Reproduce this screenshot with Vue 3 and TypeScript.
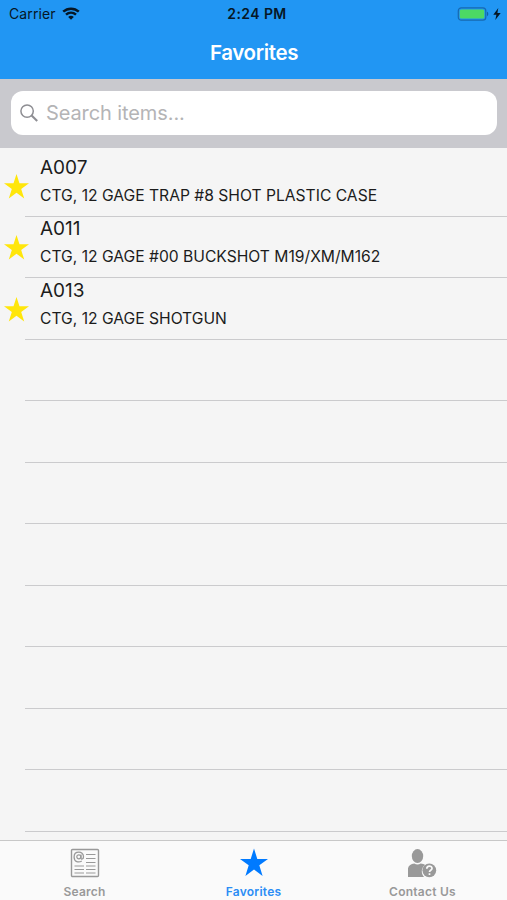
<script setup lang="ts">
interface Item {
  code: string
  description: string
}

const items: Item[] = [
  { code: 'A007', description: 'CTG, 12 GAGE TRAP #8 SHOT PLASTIC CASE' },
  { code: 'A011', description: 'CTG, 12 GAGE #00 BUCKSHOT M19/XM/M162' },
  { code: 'A013', description: 'CTG, 12 GAGE SHOTGUN' },
]
const emptyRows = 8
</script>

<template>
  <div class="screen">
    <header class="header">
      <div class="status">
        <div class="status-left">
          <span class="carrier">Carrier</span>
          <svg class="wifi" viewBox="0 0 18 13" fill="none" stroke="#061726" stroke-width="2.500">
            <path d="M1.2 4.7C5.7.6 12.300.6 16.800 4.700" />
            <path d="M4 7.600c2.900-2.600 7.100-2.600 10 0" />
            <path d="M6.200 9.900c1.600-1.500 4-1.500 5.600 0L9 12.700z" fill="#061726" stroke="none" />
          </svg>
        </div>
        <span class="clock">2:24 PM</span>
        <div class="status-right">
          <svg class="battery" viewBox="0 0 32 14">
            <rect x="1.300" y=".8" width="27.500" height="12.400" rx="3" fill="#2196f3" stroke="#1769b0" stroke-width="1.200" />
            <rect x="2.800" y="2.400" width="24.500" height="9.200" rx="1.500" fill="#4cd964" />
            <path d="M30 4.800c1.700.5 1.700 3.900 0 4.400z" fill="#1261a6" />
          </svg>
          <svg class="bolt" viewBox="0 0 8 12">
            <path d="M5.300 0 .3 6.700h3.100L2.300 12l5.400-7H4.400z" fill="#061726" />
          </svg>
        </div>
      </div>
      <h1 class="title">Favorites</h1>
    </header>

    <div class="search-bar">
      <label class="search-field">
        <svg class="glass" viewBox="0 0 18 18" fill="none" stroke="#8e8e93">
          <circle cx="7.100" cy="7.100" r="6.200" stroke-width="1.500" />
          <path d="m11.600 11.600 5.600 5.500" stroke-width="2.100" />
        </svg>
        <input class="search-input" type="text" placeholder="Search items..." />
      </label>
    </div>

    <main class="list">
      <div v-for="item in items" :key="item.code" class="row">
        <svg class="row-star" viewBox="0 0 24 24">
          <path d="M12 0l2.850 8.900H24l-7.500 5.600 2.900 9.100L12 18l-7.400 5.600 2.900-9.100L0 8.900h9.150z" />
        </svg>
        <div class="cell">
          <div class="code">{{ item.code }}</div>
          <div class="description">{{ item.description }}</div>
        </div>
      </div>
      <div v-for="n in emptyRows" :key="n" class="row"></div>
    </main>

    <nav class="tabs">
      <a class="tab">
        <svg class="tab-icon" viewBox="0 0 30 30" fill="none" stroke="#999">
          <rect x="1.500" y="1.500" width="27" height="27" rx="1" stroke-width="1.400" />
          <circle cx="8.800" cy="8.800" r="2" stroke-width="1.200" />
          <path d="M11 6.500v3.500c0 1.800 2.500 1.300 2.500-1.300 0-6-9.400-6-9.400.2 0 5 4.400 6 7.700 4.100" stroke-width="1.300" />
          <path d="M16 6.500h9.500M16 10.500h9.500M16 14.500h9.500M16 18h9.500M16 21.500h9.500M16 25h9.500M4.500 18h9.500M4.500 21.500h9.500M4.500 25h9.500" stroke-width="1.200" />
        </svg>
        <span>Search</span>
      </a>
      <a class="tab active">
        <svg class="tab-icon" viewBox="0 0 30 30">
          <path d="M15 .6l3.300 10.300H29l-8.700 6.400 3.300 10.600L15 21.500l-8.600 6.400 3.300-10.600L1 10.900h10.700z" fill="#007aff" />
        </svg>
        <span>Favorites</span>
      </a>
      <a class="tab">
        <svg class="tab-icon" viewBox="1.500 -.5 30 30" fill="#999">
          <ellipse cx="11" cy="7.600" rx="5.700" ry="7" />
          <path d="M1.200 28.500v-6c0-5 2.300-6.800 6.600-7.500 2 1.300 4.400 1.300 6.400 0 1.800.2 3.200.6 4.300 1.400-3.800 2.700-4.400 8.500-.9 12.100z" />
          <circle cx="22.800" cy="21.800" r="6.900" />
          <path d="M20.300 20.200c0-3.500 5.200-3.500 5.200-.3 0 1.900-2.500 1.900-2.500 3.600M23 24.800v1.700" fill="none" stroke="#fafafa" stroke-width="1.700" />
        </svg>
        <span>Contact Us</span>
      </a>
    </nav>
  </div>
</template>

<style>
body {
  margin: 0;
}
</style>

<style scoped>
.screen {
  display: flex;
  flex-direction: column;
  width: 507px;
  height: 900px;
  overflow: hidden;
  background: #f5f5f5;
  color: #1c1c1c;
  font-family: Inter, "Liberation Sans", sans-serif;
}
.header {
  flex: none;
  height: 79px;
  background: #2196f3;
}
.status {
  display: grid;
  grid-template-columns: 1fr auto 1fr;
  align-items: center;
  height: 27px;
  padding: 0 6px 0 9px;
  color: #061726;
}
.status-left,
.status-right {
  display: flex;
  align-items: center;
}
.status-right {
  justify-content: flex-end;
  gap: 4px;
}
.carrier {
  font-size: 14px;
  letter-spacing: 0.1px;
}
.wifi {
  width: 18px;
  height: 13px;
  margin-left: 6px;
}
.clock {
  padding-left: 4px;
  font-size: 14px;
  font-weight: 600;
  letter-spacing: 0.4px;
}
.battery {
  width: 32px;
  height: 14px;
}
.bolt {
  width: 8px;
  height: 12px;
}
.title {
  margin: 0;
  padding: 13px 0 0 1px;
  color: #fff;
  font-size: 20.5px;
  font-weight: 600;
  line-height: 26px;
  letter-spacing: -0.35px;
  text-align: center;
}
.search-bar {
  flex: none;
  box-sizing: border-box;
  height: 69px;
  padding: 12px 10px 13px 11px;
  background: #c9c9ce;
}
.search-field {
  display: flex;
  align-items: center;
  box-sizing: border-box;
  height: 44px;
  padding: 0 9px;
  gap: 8px;
  border-radius: 12px;
  background: #fff;
}
.glass {
  flex: none;
  width: 18px;
  height: 18px;
}
.search-input {
  flex: 1;
  min-width: 0;
  padding: 0;
  border: 0;
  outline: 0;
  background: none;
  font-family: inherit;
  font-size: 20px;
  letter-spacing: -0.1px;
}
.search-input::placeholder {
  color: #b4b4b6;
  opacity: 1;
}
.list {
  flex: 1;
  min-height: 0;
  padding-top: 7px;
  overflow: hidden;
}
.row {
  display: flex;
  box-sizing: border-box;
  height: 61.5px;
  padding-left: 4px;
  background: linear-gradient(#cbcbcd, #cbcbcd) 25px 100% / 100% 1px no-repeat;
}
.row-star {
  flex: none;
  width: 25px;
  height: 25px;
  margin: 18.5px 11px 0 0;
  fill: #ffe60a;
}
.cell {
  padding-top: 0.7px;
}
.code {
  font-size: 19px;
  line-height: 24px;
}
.description {
  margin-top: 5px;
  font-size: 15.65px;
  line-height: 22px;
  white-space: nowrap;
}
.tabs {
  display: flex;
  flex: none;
  box-sizing: border-box;
  height: 60px;
  border-top: 1px solid #c8c8c8;
  background: #fafafa;
}
.tab {
  display: flex;
  flex: 1;
  flex-direction: column;
  align-items: center;
  padding-top: 7px;
  color: #999;
  font-size: 12px;
  font-weight: 600;
  line-height: 16px;
  letter-spacing: 0.25px;
}
.active {
  color: #2b8df5;
}
.tab-icon {
  width: 30px;
  height: 30px;
  margin-bottom: 6px;
}
</style>
